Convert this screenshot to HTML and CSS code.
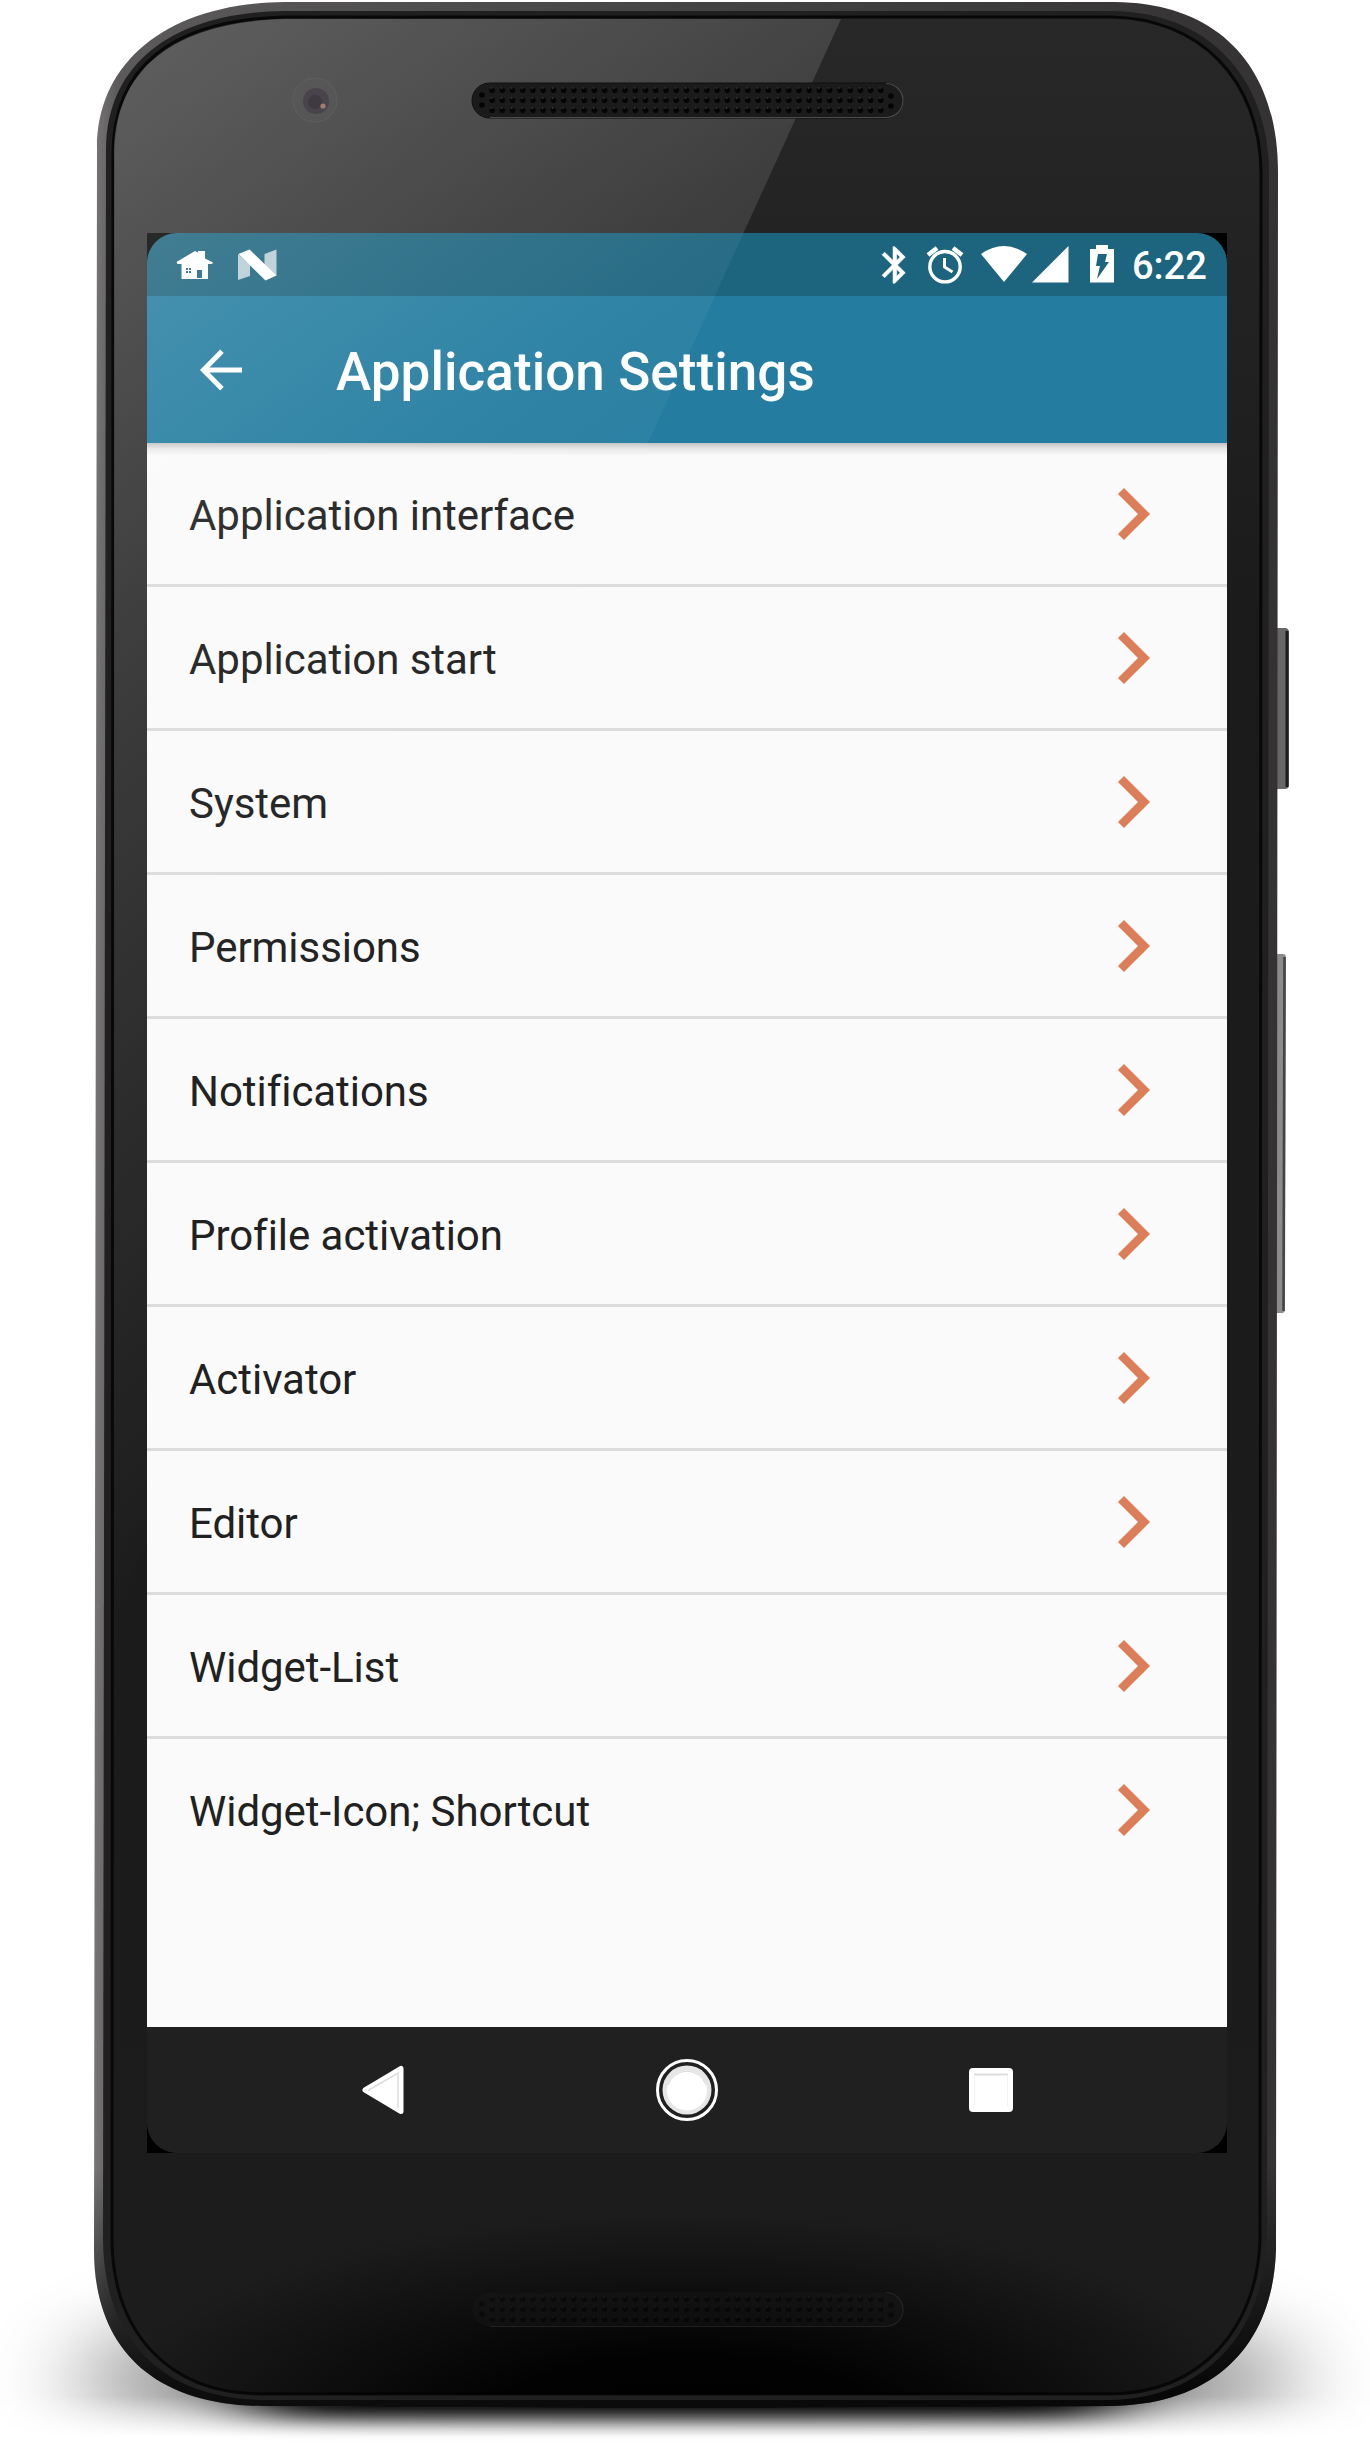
FILE: index.html
```html
<!DOCTYPE html>
<html lang="en">
<head>
<meta charset="utf-8">
<title>Application Settings</title>
<link rel="stylesheet" href="styles.css">
</head>
<body>
<main class="stage">
  <svg class="device" width="1370" height="2446" viewBox="0 0 1370 2446" aria-hidden="true">
    <defs>
      <linearGradient id="rim" x1="0" y1="0" x2="1" y2="0"><stop offset="0" stop-color="#777576"/><stop offset=".02" stop-color="#5c5a5b"/><stop offset=".5" stop-color="#454445"/><stop offset="1" stop-color="#343233"/></linearGradient>
      <linearGradient id="rimShade" x1="0" y1="0" x2="0" y2="1"><stop offset=".9" stop-color="#000" stop-opacity="0"/><stop offset=".99" stop-color="#000" stop-opacity=".85"/></linearGradient>
      <linearGradient id="face" x1="0" y1="0" x2="0" y2="1"><stop offset="0" stop-color="#282828"/><stop offset=".25" stop-color="#1b1b1b"/><stop offset="1" stop-color="#1c1c1d"/></linearGradient>
      <radialGradient id="bottomDark" gradientUnits="userSpaceOnUse" cx="0" cy="0" r="1" gradientTransform="translate(686 2430) scale(600 218)"><stop offset="0" stop-color="#000"/><stop offset=".35" stop-color="#000" stop-opacity=".92"/><stop offset=".7" stop-color="#000" stop-opacity=".42"/><stop offset="1" stop-color="#000" stop-opacity="0"/></radialGradient>
      <filter id="soft" x="-20%" y="-80%" width="140%" height="260%"><feGaussianBlur stdDeviation="46 38"/></filter>
      <filter id="tight" x="-20%" y="-100%" width="140%" height="300%"><feGaussianBlur stdDeviation="45 10"/></filter>
      <linearGradient id="floorFade" gradientUnits="userSpaceOnUse" x1="0" y1="2220" x2="0" y2="2446"><stop offset="0" stop-color="#fff" stop-opacity="0"/><stop offset=".4" stop-color="#fff"/><stop offset=".78" stop-color="#fff"/><stop offset=".96" stop-color="#fff" stop-opacity="0"/></linearGradient>
      <mask id="floor" maskUnits="userSpaceOnUse" x="0" y="2200" width="1370" height="246"><rect x="0" y="2200" width="1370" height="246" fill="url(#floorFade)"/></mask>
      <pattern id="holes" x="487" y="85" width="10.23" height="10" patternUnits="userSpaceOnUse"><circle cx="5.1" cy="5.3" r="2.8" fill="#050505"/><circle cx="4.4" cy="3.1" r=".8" fill="#444"/></pattern>
    </defs>
    <g mask="url(#floor)"><ellipse cx="686" cy="2380" rx="615" ry="95" fill="#000" opacity=".4" filter="url(#soft)"/></g>
    <rect x="250" y="2360" width="870" height="58" rx="24" fill="#000" filter="url(#tight)"/>
    <path d="M1276 628h9q4 0 4 5v152q0 4-4 4h-9z" fill="#686669"/><path d="M1287 631v156" stroke="#1c1e1d" stroke-width="3"/>
    <path d="M1276 954h7q3 0 3 4l-1 351q0 4-3 4h-6z" fill="#8b8b8b"/><path d="M1284.500 957l-1 354" stroke="#444" stroke-width="2.500"/>
    <path d="M285 2H1115C1220 3 1278 68 1278 172L1276 2250C1273 2345 1215 2405 1110 2406Q686 2410 262 2406C150 2405 94 2345 94 2250L97 148C97 60 170 3 285 2Z" fill="url(#rim)"/>
    <path d="M285 2H1115C1220 3 1278 68 1278 172L1276 2250C1273 2345 1215 2405 1110 2406Q686 2410 262 2406C150 2405 94 2345 94 2250L97 148C97 60 170 3 285 2Z" fill="url(#rimShade)"/>
    <path d="M285 11H1112C1207 12 1268 76 1269 172L1267 2240C1263 2333 1206 2398 1110 2400H262C158 2398 104 2336 103 2240L106 148C107 64 172 12 285 11Z" fill="#202020"/>
    <path d="M285 17H1110C1200 18 1260 80 1261 172L1260 2240C1257 2328 1202 2393 1110 2394H262C168 2394 113 2332 112 2240L113 155C113 68 170 20 285 17Z" fill="url(#face)" stroke="#080808" stroke-width="3"/>
    <path d="M285 17H1110C1200 18 1260 80 1261 172L1260 2240C1257 2328 1202 2393 1110 2394H262C168 2394 113 2332 112 2240L113 155C113 68 170 20 285 17Z" fill="url(#bottomDark)"/>
  </svg>
  <section class="screen">
    <div class="statusbar">
      <svg width="90" height="63" viewBox="0 0 90 63"><path fill="#fff" d="M29.500 29L48 18l3 1.500V18h7v7.500L66 29.500l-1 1.500h-4v15H34.500V31h-4z"/><path fill="#1d657f" d="M39 35h2v2h-2zm3 0h2v2h-2zm-3 3h2v2h-2zm3 0h2v2h-2zM50 37h5v8h-5z"/></svg>
      <svg width="40" height="32" viewBox="0 0 40 32"><path fill="#b7ccd5" d="M1 5l12 11v11L1 31zM27.500 5L39.500 .5V27L27.500 16z"/><path fill="#fff" d="M1.500 5l11-4.500 27 26-11 5z"/></svg>
      <span class="spacer"></span>
      <svg width="240" height="63" viewBox="0 0 240 63"><path fill="#fff" stroke="#fff" stroke-width=".3" fill-rule="evenodd" transform="translate(-2.100 10) scale(1.830)" d="M17.710 7.710L12 2h-1v7.590L6.410 5 5 6.410 10.590 12 5 17.590 6.410 19 11 14.410V22h1l5.710-5.710-4.300-4.290zM13 5.830l1.880 1.880L13 9.590zM14.880 16.290L13 18.170v-3.760z"/><g fill="none" stroke="#fff"><circle cx="70" cy="33.700" r="15.200" stroke-width="3.400"/><path stroke-width="3" d="M69.500 25v9l8 5"/><path stroke-width="4.500" d="M53 22l9-7M87 22l-9-7"/></g><path fill="#fff" d="M106 21q23-16 46 0l-23 28zM157 49.500L193.500 13v36.500zM215 16h6v-4h12v4h6v33.500h-24z"/><path fill="#1d657f" d="M223 21h9l-2 8h4l-12 17 3-13h-4z"/></svg>
      <span class="clock">6:22</span>
    </div>
    <header class="toolbar">
      <svg width="44" height="44" viewBox="0 0 44 44"><path d="M43 22H5M23 3.300L4.500 22 23 40.700" fill="none" stroke="#fff" stroke-width="5"/></svg>
      <h1 class="title">Application Settings</h1>
    </header>
    <ul class="list">
      <li class="row"><span>Application interface</span><svg class="chev" viewBox="0 0 34 52"><path d="M4 3l23 23L4 49"/></svg></li>
      <li class="row"><span>Application start</span><svg class="chev" viewBox="0 0 34 52"><path d="M4 3l23 23L4 49"/></svg></li>
      <li class="row"><span>System</span><svg class="chev" viewBox="0 0 34 52"><path d="M4 3l23 23L4 49"/></svg></li>
      <li class="row"><span>Permissions</span><svg class="chev" viewBox="0 0 34 52"><path d="M4 3l23 23L4 49"/></svg></li>
      <li class="row"><span>Notifications</span><svg class="chev" viewBox="0 0 34 52"><path d="M4 3l23 23L4 49"/></svg></li>
      <li class="row"><span>Profile activation</span><svg class="chev" viewBox="0 0 34 52"><path d="M4 3l23 23L4 49"/></svg></li>
      <li class="row"><span>Activator</span><svg class="chev" viewBox="0 0 34 52"><path d="M4 3l23 23L4 49"/></svg></li>
      <li class="row"><span>Editor</span><svg class="chev" viewBox="0 0 34 52"><path d="M4 3l23 23L4 49"/></svg></li>
      <li class="row"><span>Widget-List</span><svg class="chev" viewBox="0 0 34 52"><path d="M4 3l23 23L4 49"/></svg></li>
      <li class="row"><span>Widget-Icon; Shortcut</span><svg class="chev" viewBox="0 0 34 52"><path d="M4 3l23 23L4 49"/></svg></li>
    </ul>
    <nav class="navbar">
      <svg width="64" height="64" viewBox="0 0 64 64"><path d="M14 32L50 10.500v43z" fill="#fff" stroke="#fff" stroke-width="5" stroke-linejoin="round"/><path d="M17 32.500L47 15v35" fill="none" stroke="#ddd" stroke-width="1.500"/></svg>
      <svg width="64" height="64" viewBox="0 0 64 64"><circle cx="32" cy="32" r="29.500" fill="none" stroke="#fff" stroke-width="3"/><circle cx="32" cy="32" r="24.500" fill="#e6e6e6"/><circle cx="32" cy="32.500" r="20" fill="#fff"/><path d="M13 27a20 20 0 0138 0" fill="none" stroke="#d8d8d8"/></svg>
      <svg width="64" height="64" viewBox="0 0 64 64"><rect x="10" y="10" width="44" height="44" rx="4" fill="#fff"/><path d="M15 16.500h34" stroke="#ddd" stroke-width="2"/><path d="M15.500 17v31M48.500 17v31" stroke="#f2f2f2"/></svg>
    </nav>
  </section>
  <svg class="glass" width="1370" height="2446" viewBox="0 0 1370 2446" aria-hidden="true">
    <defs>
      <linearGradient id="bezelGloss" gradientUnits="userSpaceOnUse" x1="180" y1="20" x2="950" y2="760"><stop offset="0" stop-color="#fff" stop-opacity=".25"/><stop offset=".6" stop-color="#fff" stop-opacity=".09"/><stop offset="1" stop-color="#fff" stop-opacity="0"/></linearGradient>
      <linearGradient id="screenGloss" gradientUnits="userSpaceOnUse" x1="150" y1="233" x2="610" y2="860"><stop offset="0" stop-color="#fff" stop-opacity=".16"/><stop offset=".45" stop-color="#fff" stop-opacity=".05"/><stop offset="1" stop-color="#fff" stop-opacity="0"/></linearGradient>
    </defs>
    <path d="M285 19H841L743.500 233H147V1543L114 1616V155C114 70 172 22 285 19Z" fill="url(#bezelGloss)"/>
    <path d="M147 233H743.500L147 1543Z" fill="url(#screenGloss)"/>
    <circle cx="315" cy="100" r="22" fill="#585858" fill-opacity=".6" stroke="#626262" stroke-opacity=".8"/><circle cx="316" cy="101" r="13" fill="#49444b"/><circle cx="315" cy="102" r="7" fill="#3f3a42"/><circle cx="323" cy="106" r="2.600" fill="#a57b72"/>
    <g id="speaker"><rect x="472" y="83" width="431" height="35" rx="17.500" fill="#1b1b1b" stroke="#101010"/><path d="M886 83.500a17 17 0 010 34H490" fill="none" stroke="#4a4a4a" stroke-width="1.200"/><rect x="487.200" y="85" width="398.970" height="30" fill="url(#holes)"/><g fill="#050505"><circle cx="482" cy="95" r="2.800"/><circle cx="482" cy="105" r="2.800"/><circle cx="891" cy="96" r="2.800"/><circle cx="891" cy="106" r="2.800"/></g></g>
    <use href="#speaker" y="2209" opacity=".35"/>
  </svg>
</main>
</body>
</html>
```
FILE: styles.css
```css
body { margin: 0; background: #fff; font-family: Roboto, sans-serif; }
.stage { display: grid; width: 1370px; height: 2446px; overflow: hidden; }
.device { grid-area: 1 / 1; display: block; }
.glass { grid-area: 1 / 1; z-index: 2; display: block; pointer-events: none; }
.screen { grid-area: 1 / 1; z-index: 1; margin: 233px 0 0 147px; width: 1080px; height: 1920px; display: flex; flex-direction: column; background: #000; }
.statusbar { height: 63px; box-sizing: border-box; padding-right: 20px; display: flex; align-items: center; background: #1d657f; border-radius: 30px 30px 0 0; }
.spacer { flex: 1; }
.clock { width: 75px; margin-left: 17px; padding-top: 3px; color: #fff; font-size: 38px; font-weight: 500; white-space: nowrap; }
.toolbar { height: 147px; box-sizing: border-box; padding-left: 52px; display: flex; align-items: center; background: #247da0; }
.title { margin: 0 0 0 93px; padding-top: 5px; font-size: 53px; font-weight: 500; letter-spacing: .06px; color: #fff; }
.list { flex: 1; margin: 0; padding: 0; list-style: none; background: linear-gradient(rgba(0, 0, 0, .22), rgba(0, 0, 0, .07) 6px, transparent 13px) #fafafa; }
.row { height: 144px; box-sizing: border-box; display: flex; align-items: center; justify-content: space-between; padding: 0 76px 0 42px; font-size: 42px; letter-spacing: -.05px; color: #212121; border-bottom: 3px solid #dcdcdc; }
.row span { padding-top: 4px; }
.row:last-child { border-bottom-color: transparent; }
.chev { width: 34px; height: 52px; overflow: visible; fill: none; stroke: #dd7e5b; stroke-width: 8.5; }
.navbar { height: 126px; display: flex; justify-content: center; align-items: center; gap: 240px; background: #202020; border-radius: 0 0 30px 30px; }
```
